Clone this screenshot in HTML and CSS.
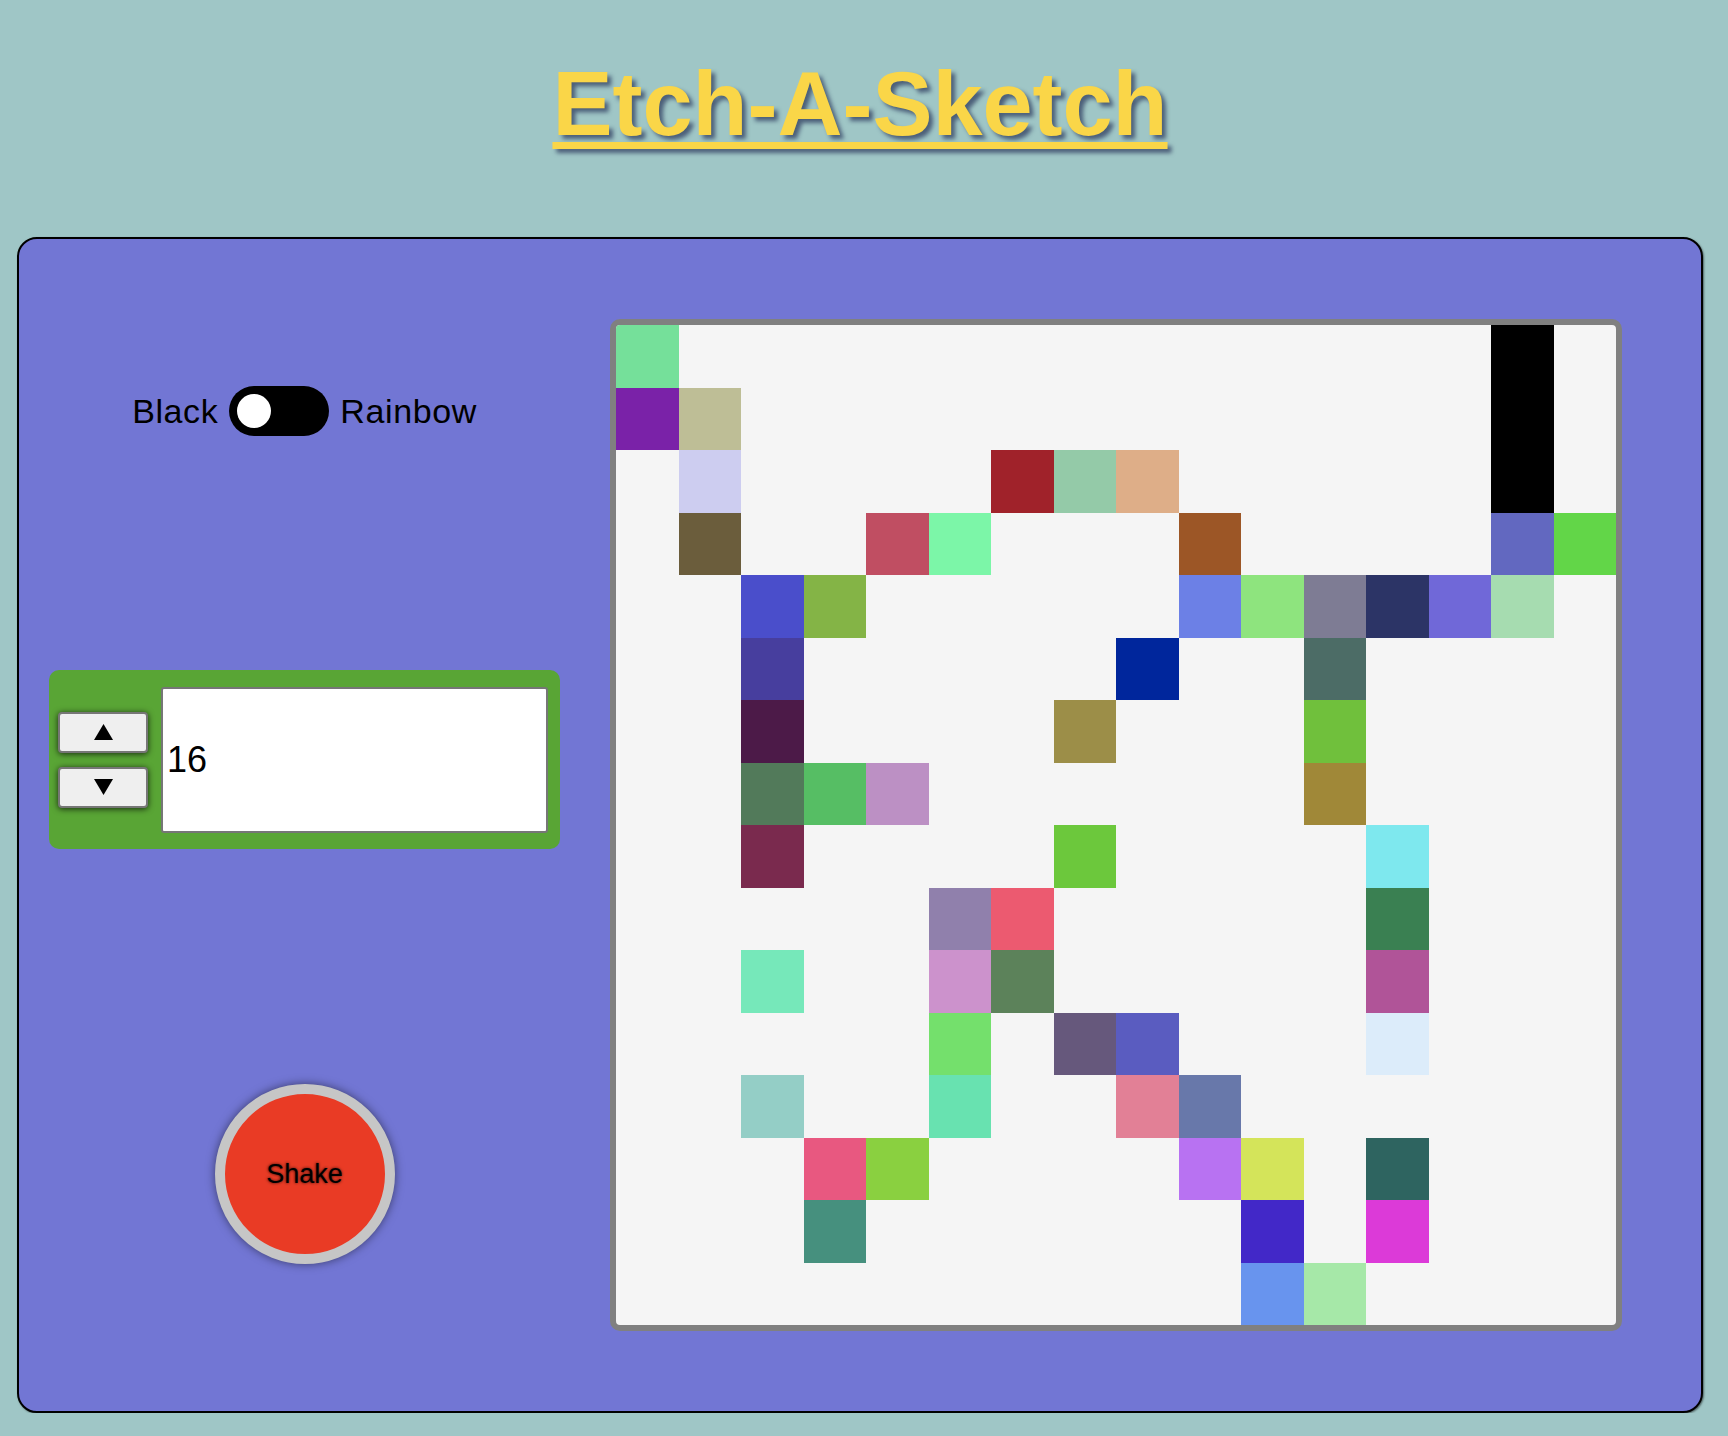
FILE: index.html
```html
<!DOCTYPE html>
<html lang="en">
<head>
<meta charset="utf-8">
<title>Etch-A-Sketch</title>
<link rel="stylesheet" href="styles.css">
</head>
<body>
<h1 class="title">Etch-A-Sketch</h1>
<main class="board">
  <section class="controls">
    <div class="mode">
      <span class="mode-label">Black</span>
      <span class="switch"><span class="knob"></span></span>
      <span class="mode-label">Rainbow</span>
    </div>
    <div class="size">
      <div class="steppers">
        <button class="step" type="button"><svg width="19" height="16" viewBox="0 0 19 16"><polygon points="9.5,0 19,16 0,16" fill="#000"/></svg></button>
        <button class="step" type="button"><svg width="19" height="16" viewBox="0 0 19 16"><polygon points="0,0 19,0 9.5,16" fill="#000"/></svg></button>
      </div>
      <input class="size-input" type="text" value="16">
    </div>
    <button class="shake" type="button">Shake</button>
  </section>
  <section class="grid">
    <div style="background:#75e09a"></div><div></div><div></div><div></div><div></div><div></div><div></div><div></div><div></div><div></div><div></div><div></div><div></div><div></div><div style="background:#000"></div><div></div>
    <div style="background:#7a22a8"></div><div style="background:#bebe96"></div><div></div><div></div><div></div><div></div><div></div><div></div><div></div><div></div><div></div><div></div><div></div><div></div><div style="background:#000"></div><div></div>
    <div></div><div style="background:#cdcdf0"></div><div></div><div></div><div></div><div></div><div style="background:#a0222a"></div><div style="background:#94caa8"></div><div style="background:#deae88"></div><div></div><div></div><div></div><div></div><div></div><div style="background:#000"></div><div></div>
    <div></div><div style="background:#6b5d3c"></div><div></div><div></div><div style="background:#c04e62"></div><div style="background:#7cf6a8"></div><div></div><div></div><div></div><div style="background:#9c5626"></div><div></div><div></div><div></div><div></div><div style="background:#6268c0"></div><div style="background:#62d648"></div>
    <div></div><div></div><div style="background:#4a4ecb"></div><div style="background:#84b446"></div><div></div><div></div><div></div><div></div><div></div><div style="background:#6c80e6"></div><div style="background:#8ee47e"></div><div style="background:#7e7c94"></div><div style="background:#2c3466"></div><div style="background:#7068d8"></div><div style="background:#a6dcb0"></div><div></div>
    <div></div><div></div><div style="background:#473e9e"></div><div></div><div></div><div></div><div></div><div></div><div style="background:#00269c"></div><div></div><div></div><div style="background:#4c6c66"></div><div></div><div></div><div></div><div></div>
    <div></div><div></div><div style="background:#4c1a48"></div><div></div><div></div><div></div><div></div><div style="background:#9c8e48"></div><div></div><div></div><div></div><div style="background:#70c03c"></div><div></div><div></div><div></div><div></div>
    <div></div><div></div><div style="background:#527a5a"></div><div style="background:#56be64"></div><div style="background:#bc90c4"></div><div></div><div></div><div></div><div></div><div></div><div></div><div style="background:#a08838"></div><div></div><div></div><div></div><div></div>
    <div></div><div></div><div style="background:#7a2a4e"></div><div></div><div></div><div></div><div></div><div style="background:#6cc83c"></div><div></div><div></div><div></div><div></div><div style="background:#7ee8ee"></div><div></div><div></div><div></div>
    <div></div><div></div><div></div><div></div><div></div><div style="background:#9080ac"></div><div style="background:#ec5a70"></div><div></div><div></div><div></div><div></div><div></div><div style="background:#3a8052"></div><div></div><div></div><div></div>
    <div></div><div></div><div style="background:#76e8ba"></div><div></div><div></div><div style="background:#cc92cc"></div><div style="background:#5c825a"></div><div></div><div></div><div></div><div></div><div></div><div style="background:#b05498"></div><div></div><div></div><div></div>
    <div></div><div></div><div></div><div></div><div></div><div style="background:#74e06c"></div><div></div><div style="background:#66587c"></div><div style="background:#5a5cc0"></div><div></div><div></div><div></div><div style="background:#dcecfa"></div><div></div><div></div><div></div>
    <div></div><div></div><div style="background:#94cec6"></div><div></div><div></div><div style="background:#68e2b0"></div><div></div><div></div><div style="background:#e28096"></div><div style="background:#6878aa"></div><div></div><div></div><div></div><div></div><div></div><div></div>
    <div></div><div></div><div></div><div style="background:#e85880"></div><div style="background:#8ad040"></div><div></div><div></div><div></div><div></div><div style="background:#b872f2"></div><div style="background:#d4e45a"></div><div></div><div style="background:#2e6460"></div><div></div><div></div><div></div>
    <div></div><div></div><div></div><div style="background:#46907e"></div><div></div><div></div><div></div><div></div><div></div><div></div><div style="background:#4228c8"></div><div></div><div style="background:#dc3ad8"></div><div></div><div></div><div></div>
    <div></div><div></div><div></div><div></div><div></div><div></div><div></div><div></div><div></div><div></div><div style="background:#6894ee"></div><div style="background:#a6e8a8"></div><div></div><div></div><div></div><div></div>
  </section>
</main>
</body>
</html>
```

FILE: styles.css
```css
body {
  margin: 8px 16px 8px 8px;
  background: #9fc6c6;
  font-family: "Liberation Sans", Arial, sans-serif;
  color: #000;
}

.title {
  margin: 51px 0 0;
  font-size: 90px;
  line-height: 90px;
  font-weight: bold;
  text-align: center;
  color: #fad648;
  text-decoration: underline;
  text-decoration-thickness: 7px;
  text-underline-offset: 7px;
  text-shadow: 4px 4px 4px rgba(30, 40, 80, 0.65);
}

.board {
  margin: 88px 9px 0;
  border: 2px solid #000;
  border-radius: 20px;
  background: #7276d4;
  display: flex;
  gap: 20px;
  padding: 80px 79px 80px 0;
  box-shadow: 1px 1px 2px rgba(0, 0, 0, 0.5);
}

.controls {
  width: 571px;
  flex: none;
  display: flex;
  flex-direction: column;
  align-items: center;
  padding-top: 67px;
  box-sizing: border-box;
}

.mode {
  display: flex;
  align-items: center;
  gap: 11px;
  height: 50px;
  font-size: 34px;
  letter-spacing: 0.6px;
}

.switch {
  width: 100px;
  height: 50px;
  box-sizing: border-box;
  border-radius: 25px;
  background: #000;
  display: flex;
  align-items: center;
  padding: 0 8px;
}

.knob {
  width: 34px;
  height: 34px;
  border-radius: 50%;
  background: #fff;
}

.size {
  margin-top: 234px;
  width: 511px;
  height: 179px;
  box-sizing: border-box;
  background: #59a535;
  border-radius: 10px;
  display: flex;
  align-items: center;
  gap: 13px;
  padding: 0 12px 0 9px;
}

.steppers {
  display: flex;
  flex-direction: column;
  gap: 14px;
}

.step {
  width: 90px;
  height: 41px;
  box-sizing: border-box;
  padding: 0;
  margin: 0;
  background: #efefef;
  border: 2px solid #767676;
  border-radius: 4px;
  box-shadow: 0 1px 6px rgba(0, 0, 0, 0.75);
  display: flex;
  align-items: center;
  justify-content: center;
}

.size-input {
  width: 387px;
  height: 146px;
  box-sizing: border-box;
  margin: 0;
  padding: 1px 2px 1px 4px;
  border: 2px solid #767676;
  border-radius: 3px;
  background: #fff;
  color: #000;
  font-family: "Liberation Sans", Arial, sans-serif;
  font-size: 36px;
}

.shake {
  margin-top: 235px;
  width: 180px;
  height: 180px;
  box-sizing: border-box;
  padding: 0;
  border-radius: 50%;
  border: 10px solid #c6c6c6;
  background: #e93b25;
  color: #000;
  font-family: "Liberation Sans", Arial, sans-serif;
  font-size: 27px;
  text-shadow: 0 0 3px rgba(0, 0, 0, 0.8);
  box-shadow: 0 0 10px rgba(0, 0, 0, 0.5);
}

.grid {
  flex: none;
  width: 1000px;
  height: 1000px;
  border: 6px solid #808080;
  border-radius: 10px;
  overflow: hidden;
  background: #f5f5f5;
  display: grid;
  grid-template-columns: repeat(16, 1fr);
  grid-template-rows: repeat(16, 1fr);
}
```
